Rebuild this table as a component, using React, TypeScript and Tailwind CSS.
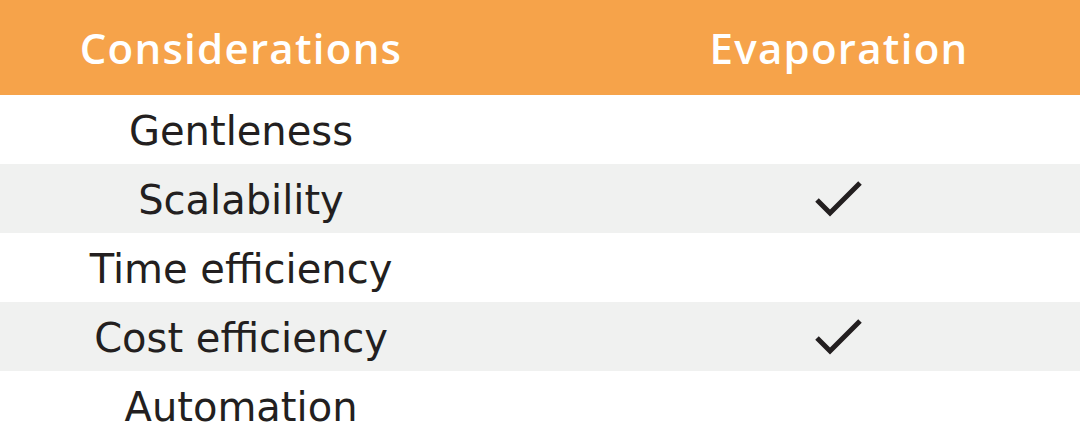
const rows = [
  { label: "Gentleness", check: false },
  { label: "Scalability", check: true },
  { label: "Time efficiency", check: false },
  { label: "Cost efficiency", check: true },
  { label: "Automation", check: false },
];

function Check() {
  return (
    <svg width="60" height="44" viewBox="0 0 60 44" fill="none">
      <path d="M8 23 L21 36 L51 6" stroke="#231f20" strokeWidth="5" strokeLinecap="butt" strokeLinejoin="miter" />
    </svg>
  );
}

export default function App() {
  return (
    <div className="w-[1080px] h-[440px] bg-white overflow-hidden">
      <div
        className="flex h-[95px] bg-[#f6a34a] text-white text-[42px] font-semibold items-center tracking-[0.03em]"
        style={{ fontFamily: '"Open Sans", sans-serif' }}
      >
        <div className="w-[482px] text-center">Considerations</div>
        <div className="w-[482px] ml-auto text-center">Evaporation</div>
      </div>
      {rows.map((r, i) => (
        <div
          key={r.label}
          className={`flex h-[69px] items-center text-[40px] text-[#231f20] ${i % 2 === 1 ? "bg-[#f0f1f0]" : "bg-white"}`}
          style={{ fontFamily: '"DejaVu Sans", sans-serif' }}
        >
          <div className="w-[482px] text-center pt-[3px]">{r.label}</div>
          <div className="w-[482px] ml-auto flex justify-center">{r.check && <Check />}</div>
        </div>
      ))}
    </div>
  );
}
